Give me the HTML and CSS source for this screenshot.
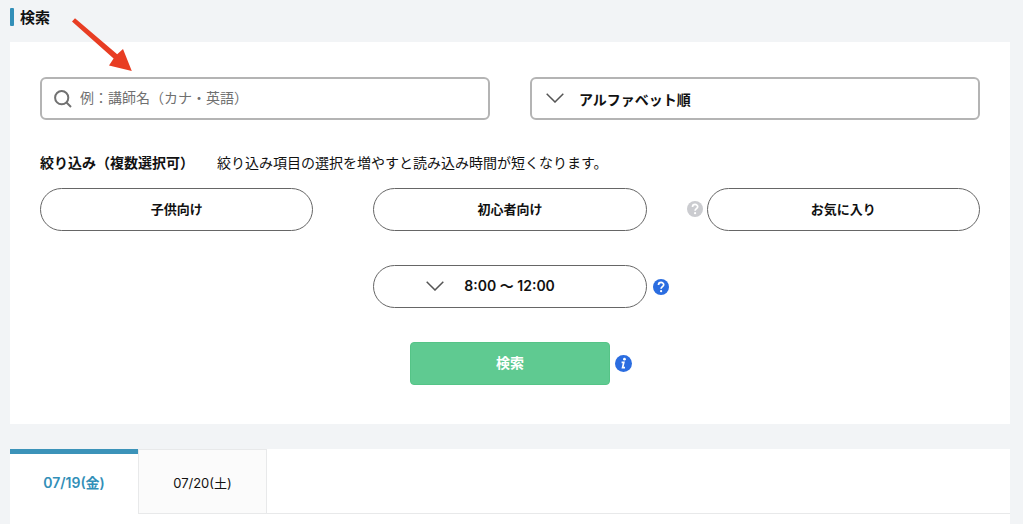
FILE: index.html
```html
<!DOCTYPE html>
<html lang="ja">
<head>
<meta charset="utf-8">
<meta name="viewport" content="width=device-width, initial-scale=1">
<title>検索</title>
<link rel="stylesheet" href="styles.css">
</head>
<body>
<main class="page">
  <h1 class="title">検索</h1>
  <form class="card">
    <div class="fields">
      <label class="field">
        <svg class="field-icon search-icon" viewBox="0 0 18 18" aria-hidden="true"><circle cx="7.7" cy="7.7" r="6.6"/><path d="M12.5 12.5L17 17"/></svg>
        <input class="box text-box" type="text" aria-label="講師名" placeholder="例：講師名（カナ・英語）">
      </label>
      <label class="field">
        <svg class="field-icon chevron" viewBox="0 0 18 10" aria-hidden="true"><path d="M.7.7L9 9L17.3.7"/></svg>
        <select class="box select-box" aria-label="並び順"><option>アルファベット順</option></select>
      </label>
    </div>
    <div class="filter-head">
      <strong>絞り込み（複数選択可）</strong>
      <span>絞り込み項目の選択を増やすと読み込み時間が短くなります。</span>
    </div>
    <div class="filters">
      <button class="pill" type="button">子供向け</button>
      <button class="pill" type="button">初心者向け</button>
      <div class="pill-wrap">
        <svg class="mark mark-left" viewBox="0 0 16 16" role="img" aria-label="ヘルプ"><circle cx="8" cy="8" r="8" fill="#cbccd0"/><path d="M5.5 6C5.5 2.6 10.7 2.7 10.7 5.8C10.7 7.6 8.1 7.8 8.1 9.8" fill="none" stroke="#fff" stroke-width="1.7"/><circle cx="8.1" cy="12.2" r="1.1" fill="#fff"/></svg>
        <button class="pill" type="button">お気に入り</button>
      </div>
      <div class="pill-wrap time">
        <svg class="field-icon chevron time-chevron" viewBox="0 0 18 10" aria-hidden="true"><path d="M.7.7L9 9L17.3.7"/></svg>
        <select class="pill time-select" aria-label="時間帯"><option>8:00 〜 12:00</option></select>
        <svg class="mark mark-right" viewBox="0 0 16 16" role="img" aria-label="ヘルプ"><circle cx="8" cy="8" r="8" fill="#2b6de0"/><path d="M5.5 6C5.5 2.6 10.7 2.7 10.7 5.8C10.7 7.6 8.1 7.8 8.1 9.8" fill="none" stroke="#fff" stroke-width="1.7"/><circle cx="8.1" cy="12.2" r="1.1" fill="#fff"/></svg>
      </div>
    </div>
    <div class="submit-wrap">
      <button class="submit" type="submit">検索</button>
      <svg class="mark info" viewBox="0 0 16 16" role="img" aria-label="情報"><circle cx="8" cy="8" r="8" fill="#2b6de0"/><circle cx="8.9" cy="3.9" r="1.3" fill="#fff"/><path d="M6.2 6.9H8.3L7.1 11.9H9.4" fill="none" stroke="#fff" stroke-width="1.6"/></svg>
    </div>
  </form>
  <section class="results">
    <nav class="tabs" aria-label="日付">
      <button class="tab active" type="button">07/19(金)</button>
      <button class="tab" type="button">07/20(土)</button>
      <span class="tab-rest"></span>
    </nav>
  </section>
</main>
<svg class="pointer" viewBox="0 0 62 56" aria-hidden="true"><path d="M4 .3L46.2 36.2L52 31L60.8 53L38 47.4L42.6 40.5L1 3.5Z" fill="#e83d23"/></svg>
</body>
</html>
```
FILE: styles.css
```css
* {
  box-sizing: border-box;
}

body {
  margin: 0;
  background: #f2f4f6;
  color: #111;
  font: 14px/20px "Noto Sans CJK JP", sans-serif;
}

button,
input,
select {
  font: inherit;
  color: inherit;
  margin: 0;
}

.page {
  display: flex;
  flex-direction: column;
  min-height: 100vh;
  padding: 7px 13px 0 10px;
}

.title {
  display: flex;
  align-items: center;
  gap: 6px;
  margin: 0 0 15px;
  font-size: 15px;
  line-height: 20px;
}

.title::before {
  content: "";
  width: 4px;
  height: 18px;
  border-radius: 1px;
  background: #328fb8;
}

.card {
  padding: 35px 30px 39px;
  background: #fff;
}

.fields {
  display: grid;
  grid-template-columns: 1fr 1fr;
  gap: 40px;
}

.field {
  position: relative;
}

.field-icon {
  position: absolute;
  fill: none;
  stroke: #555;
  pointer-events: none;
}

.search-icon {
  top: 13px;
  left: 14px;
  width: 18px;
  stroke: #717171;
  stroke-width: 2;
}

.chevron {
  top: 16px;
  left: 16px;
  width: 18px;
  stroke-width: 1.5;
}

.box {
  display: block;
  width: 100%;
  height: 43px;
  border: 2px solid #b4b4b4;
  border-radius: 6px;
  background: transparent;
  appearance: none;
}

.text-box {
  padding: 0 12px 4px 38px;
}

.text-box::placeholder {
  color: #707070;
  opacity: 1;
}

.select-box {
  padding: 0 12px 0 47px;
  font-weight: 700;
}

.filter-head {
  display: flex;
  gap: 23px;
  margin: 32px 0 16px;
}

.filters {
  display: grid;
  grid-template-columns: repeat(3, 1fr);
  gap: 34px 60px;
}

.pill {
  width: 100%;
  height: 43px;
  padding: 0 0 2px;
  border: 1px solid #666;
  border-radius: 22px;
  background: transparent;
  font-size: 13px;
  font-weight: 700;
  appearance: none;
}

.pill-wrap {
  position: relative;
}

.time {
  grid-column: 2;
}

.time-select {
  display: block;
  padding: 0 0 2px 90px;
  font-family: Inter, "Noto Sans CJK JP", sans-serif;
  font-size: 14px;
  font-weight: 600;
}

.time-chevron {
  left: 53px;
}

.mark {
  position: absolute;
  width: 16px;
  height: 16px;
}

.mark-left {
  top: 13px;
  right: calc(100% + 4px);
}

.mark-right {
  top: 14px;
  left: calc(100% + 6px);
}

.submit-wrap {
  position: relative;
  width: 200px;
  margin: 34px auto 0;
}

.submit {
  display: block;
  width: 100%;
  height: 43px;
  padding: 0 0 3px;
  border: 1px solid #55c487;
  border-radius: 4px;
  background: #5fca91;
  color: #fff;
  font-weight: 700;
}

.info {
  top: 13px;
  left: calc(100% + 5px);
  width: 17px;
  height: 17px;
}

.results {
  flex: 1;
  margin-top: 25px;
  background: #fff;
}

.tabs {
  display: flex;
}

.tab {
  width: 128px;
  height: 65px;
  padding: 2px 0 0;
  border: 1px solid #e8e9ea;
  border-left: 0;
  background: #fbfbfb;
  font-family: Inter, "Noto Sans CJK JP", sans-serif;
  font-size: 13px;
}

.tab.active {
  width: 129px;
  padding: 0 0 2px;
  border: 0;
  border-right: 1px solid #e8e9ea;
  box-shadow: inset 0 5px #3c93b9;
  padding-top: 4px;
  background: #fff;
  color: #328fb8;
  font-size: 14px;
  font-weight: 600;
}

.tab-rest {
  flex: 1;
  border-bottom: 1px solid #e8e9ea;
}

.pointer {
  position: absolute;
  top: 18px;
  left: 71px;
  width: 62px;
  pointer-events: none;
}
```
